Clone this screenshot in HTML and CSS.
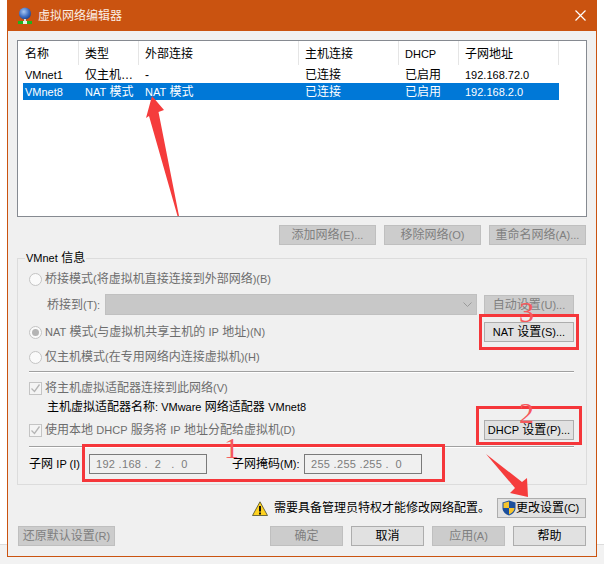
FILE: index.html
```html
<!DOCTYPE html>
<html lang="zh">
<head>
<meta charset="utf-8">
<title>虚拟网络编辑器</title>
<link rel="stylesheet" href="styles.css">
</head>
<body>
<div class="window">
  <div class="titlebar">
    <svg class="appicon" width="16" height="17" viewBox="0 0 16 17">
      <defs><radialGradient id="g" cx="0.4" cy="0.35" r="0.7"><stop offset="0" stop-color="#a9c8f2"/><stop offset="0.6" stop-color="#3f6fc4"/><stop offset="1" stop-color="#1f3f86"/></radialGradient></defs>
      <circle cx="8" cy="6.5" r="6" fill="url(#g)"/>
      <rect x="7" y="12" width="2" height="3" fill="#d8d8d8"/>
      <rect x="1" y="14" width="14" height="3" fill="#1fb31f"/>
      <rect x="6" y="14" width="4" height="3" fill="#e8f5e8"/>
    </svg>
    <span class="title">虚拟网络编辑器</span>
    <svg class="close" width="11" height="11" viewBox="0 0 11 11"><path d="M.5.5l10 10M10.500.5l-10 10" stroke="#fff" stroke-width="1.200" fill="none"/></svg>
  </div>
  <div class="body">
    <div class="list">
      <div class="row head"><span>名称</span><span>类型</span><span>外部连接</span><span>主机连接</span><span><i>DHCP</i></span><span>子网地址</span></div>
      <div class="row item"><span><i>VMnet1</i></span><span>仅主机…</span><span>-</span><span>已连接</span><span>已启用</span><span><i>192.168.72.0</i></span></div>
      <div class="row item selected"><span><i>VMnet8</i></span><span><i>NAT</i> 模式</span><span><i>NAT</i> 模式</span><span>已连接</span><span>已启用</span><span><i>192.168.2.0</i></span></div>
    </div>
    <div class="listbtns">
      <button class="btn off w97">添加网络<i>(E)...</i></button>
      <button class="btn off w97">移除网络<i>(O)</i></button>
      <button class="btn off w97">重命名网络<i>(A)...</i></button>
    </div>
    <fieldset class="group">
      <legend><i>VMnet</i> 信息</legend>
      <div class="line first"><span class="radio"></span><span class="dim">桥接模式<i>(</i>将虚拟机直接连接到外部网络<i>)(B)</i></span></div>
      <div class="line bridge">
        <span class="dim bridgelabel">桥接到<i>(T):</i></span>
        <span class="select"><svg width="9" height="5" viewBox="0 0 9 5"><path d="M.5.500l4 4 4-4" stroke="#9a9a9a" fill="none"/></svg></span>
        <button class="btn off w90">自动设置<i>(U)...</i></button>
      </div>
      <div class="line nat"><span class="radio on"></span><span class="dim"><i>NAT</i> 模式<i>(</i>与虚拟机共享主机的 <i>IP</i> 地址<i>)(N)</i></span><button class="btn w90 push"><i>NAT</i> 设置<i>(S)...</i></button></div>
      <div class="line host"><span class="radio"></span><span class="dim">仅主机模式<i>(</i>在专用网络内连接虚拟机<i>)(H)</i></span></div>
      <div class="sep one"></div>
      <div class="line"><span class="check"><svg width="11" height="11" viewBox="0 0 11 11"><path d="M1.500 5.500l3 3 5-7" stroke="#b5b5b5" stroke-width="1.300" fill="none"/></svg></span><span class="dim">将主机虚拟适配器连接到此网络<i>(V)</i></span></div>
      <div class="line adapter">主机虚拟适配器名称<i>: VMware</i> 网络适配器 <i>VMnet8</i></div>
      <div class="line dhcp"><span class="check"><svg width="11" height="11" viewBox="0 0 11 11"><path d="M1.500 5.500l3 3 5-7" stroke="#b5b5b5" stroke-width="1.300" fill="none"/></svg></span><span class="dim">使用本地 <i>DHCP</i> 服务将 <i>IP</i> 地址分配给虚拟机<i>(D)</i></span><button class="btn w90 push"><i>DHCP</i> 设置<i>(P)...</i></button></div>
      <div class="sep two"></div>
      <div class="line subnet">
        <span class="iplabel">子网 <i>IP (I)</i></span>
        <span class="ip">192 .168 .  2   .  0</span>
        <span class="masklabel">子网掩码<i>(M):</i></span>
        <span class="ip">255 .255 .255 .  0</span>
      </div>
    </fieldset>
    <div class="warnrow">
      <svg class="warn" width="16" height="15" viewBox="0 0 16 15"><path d="M8 .8L15.500 14.500H.5z" fill="#ffd21f" stroke="#4a4a2a" stroke-width=".8"/><rect x="7" y="5" width="2" height="5.500" fill="#111"/><rect x="7" y="11.500" width="2" height="2" fill="#111"/></svg>
      <span class="warntext">需要具备管理员特权才能修改网络配置。</span>
      <button class="btn change"><svg width="14" height="16" viewBox="0 0 14 16"><path d="M7 .5L13.500 2.500V8C13.500 12 10 14.500 7 15.500 4 14.500.5 12 .5 8V2.500z" fill="#1c4f9c"/><path d="M7 1.500V8H1.500V3zM7 8h5.500C12.500 11 9.500 13.500 7 14.500z" fill="#f6c42c"/></svg>更改设置<i>(C)</i></button>
    </div>
    <div class="footer">
      <button class="btn off w97">还原默认设置<i>(R)</i></button>
      <span class="spacer"></span>
      <button class="btn off w73">确定</button>
      <button class="btn w73">取消</button>
      <button class="btn off w73">应用<i>(A)</i></button>
      <button class="btn w73">帮助</button>
    </div>
  </div>
</div>

<div class="mark m1"></div>
<div class="mark m2"></div>
<div class="mark m3"></div>
<span class="num n1">1</span>
<span class="num n2">2</span>
<span class="num n3">3</span>
<svg class="arrows" width="604" height="564" viewBox="0 0 604 564">
  <path d="M152 96L164 110 158.500 112 179 216 177.500 216 149 116 146 118z" fill="#f53c3c"/>
  <path d="M486 454L522 482 527 478 528 497 510 493 515 488z" fill="#f53c3c"/>
</svg>
</body>
</html>
```
FILE: styles.css
```css
* { box-sizing: border-box; }
html, body { margin: 0; padding: 0; height: 564px; overflow: hidden; }
body {
  font: 12px/16px "Liberation Sans", "Noto Sans CJK SC", sans-serif;
  color: #000;
  background: linear-gradient(#fff 0, #fff 544px, #dcdcdc 544px, #dcdcdc 545px, #f2f2f2 545px);
}
i { font-style: normal; font-size: 11px; }
.window {
  width: 590px;
  height: 557px;
  margin-left: 7px;
  border: 1px solid #ca5310;
  border-top: 0;
  background: #f0f0f0;
  display: flex;
  flex-direction: column;
}
.titlebar {
  height: 31px;
  flex: none;
  background: #ca5310;
  display: flex;
  align-items: center;
  padding: 0 10px 0 9px;
  color: #fbeee6;
}
.appicon { margin-right: 5px; margin-top: -1px; }
.title { flex: 1; }
.close { margin-top: -1px; }
.body { flex: 1; padding: 9px 9px 0; display: flex; flex-direction: column; }
.list { height: 177px; background: #fff; border: 1px solid #868a91; flex: none; }
.row { display: grid; grid-template-columns: 61px 60px 160px 100px 60px 100px; width: 541px; white-space: nowrap; }
.row span { padding-left: 6px; display: block; }
.row span:first-child { padding-left: 7px; }
.head { height: 25px; line-height: 27px; }
.head span { border-right: 1px solid #e5e5e5; height: 24px; }
.item { height: 17px; line-height: 19px; }
.selected { color: #fff; background: linear-gradient(90deg, #fff 5px, #0078d7 5px); }
.listbtns { display: flex; justify-content: flex-end; gap: 8px; margin-top: 8px; padding-right: 1px; }
.btn {
  height: 20px;
  padding: 0;
  border: 1px solid #adadad;
  background: #e1e1e1;
  color: #000;
  font: inherit;
  white-space: nowrap;
  flex: none;
}
.btn.off { background: #cccccc; border-color: #bfbfbf; color: #7f7f7f; }
.w97 { width: 97px; }
.w90 { width: 90px; }
.w73 { width: 73px; }
.group {
  margin: 5px 0 0;
  padding: 0 12px 0 11px;
  border: 1px solid #dcdcdc;
  height: 235px;
  min-width: 0;
}
.group legend { margin-left: -4px; padding: 0 1px; height: 16px; line-height: 16px; }
.line { display: flex; align-items: center; height: 20px; white-space: nowrap; }
.line > .dim { display: block; }
.first { margin-top: 3px; }
.dim { color: #6d6d6d; }
.radio {
  width: 13px; height: 13px; border-radius: 50%; border: 1px solid #c4c4c4;
  background: #fafafa; flex: none; margin-right: 3px; display: flex; align-items: center; justify-content: center;
}
.radio.on::after { content: ""; width: 7px; height: 7px; border-radius: 50%; background: #b4b4b4; }
.check {
  width: 13px; height: 13px; border: 1px solid #c4c4c4; background: #f4f4f4; flex: none; margin-right: 3px;
  display: flex; align-items: center; justify-content: center;
}
.bridge { height: 21px; margin-top: 5px; }
.bridgelabel { margin-left: 18px; width: 58px; }
.select {
  width: 372px; height: 21px; background: #c8c8c8; border: 1px solid #c0c0c0; flex: none;
  display: flex; align-items: center; justify-content: flex-end; padding-right: 4px; margin-right: 7px;
}
.nat { margin-top: 7px; }
.host { margin-top: 5px; }
.push { margin-left: auto; }
.sep { height: 2px; background: linear-gradient(#a0a0a0 1px, #fff 1px); }
.sep.one { margin: 4px 0 5px; }
.sep.two { margin: 6px 0 6px; }
.adapter { padding-left: 18px; height: 19px; display: block; line-height: 19px; }
.dhcp { margin-top: 3px; }
.subnet { height: 20px; margin-top: 0; }
.iplabel { width: 60px; }
.masklabel { margin-left: 25px; width: 72px; }
.ip {
  width: 118px; height: 20px; border: 1px solid #7a7a7a; background: #f0f0f0; color: #7c7c7c;
  padding-left: 6px; line-height: 18px; font-size: 11px; letter-spacing: .3px; white-space: pre;
}
.warnrow { display: flex; align-items: center; height: 20px; margin-top: 13px; padding-right: 1px; }
.warn { margin-left: 235px; margin-right: 6px; }
.warntext { flex: 1; }
.change { width: 89px; display: flex; align-items: center; padding-left: 4px; }
.footer { display: flex; gap: 8px; margin-top: 8px; padding: 0 1px; }
.spacer { flex: 1; }
.mark { position: absolute; border: 3px solid #f5363a; }
.m1 { left: 82px; top: 444px; width: 363px; height: 38px; }
.m2 { left: 476px; top: 406px; width: 106px; height: 39px; }
.m3 { left: 479px; top: 314px; width: 100px; height: 36px; }
.num { position: absolute; font: 30px/30px "Liberation Serif", serif; color: #f5595c; }
.n1 { left: 224px; top: 433px; }
.n2 { left: 519px; top: 398px; }
.n3 { left: 519px; top: 297px; }
.arrows { position: absolute; left: 0; top: 0; pointer-events: none; }
```
